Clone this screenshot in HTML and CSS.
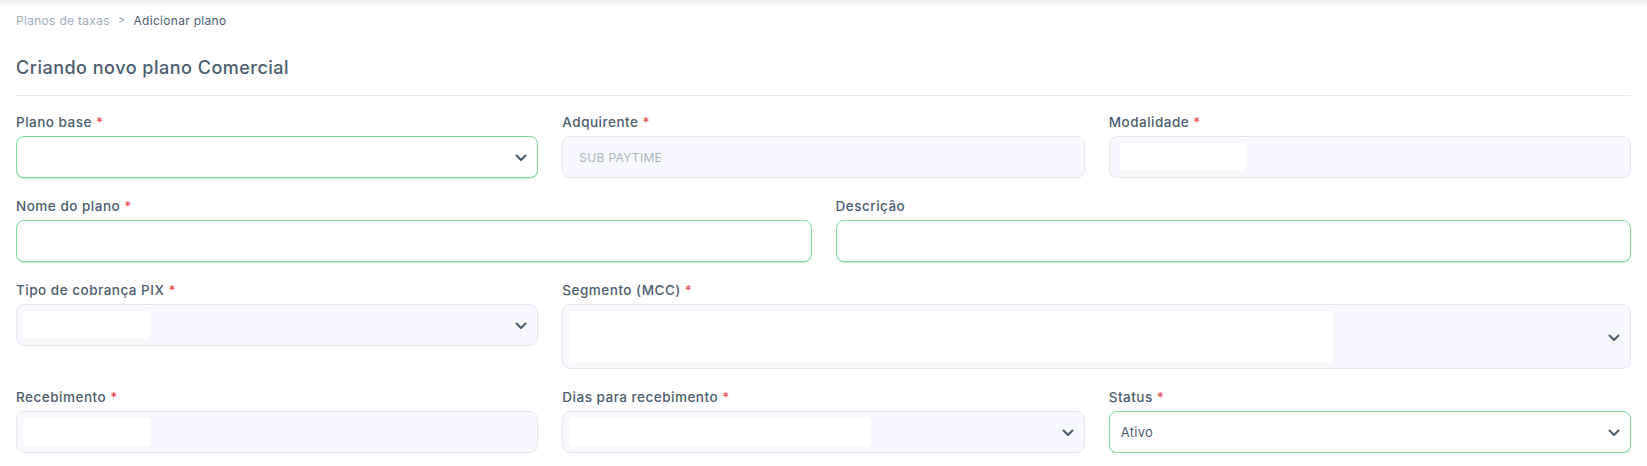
FILE: index.html
```html
<!DOCTYPE html>
<html lang="pt-BR">
<head>
  <meta charset="UTF-8" />
  <meta name="viewport" content="width=device-width, initial-scale=1.0"/>
  <title>Adicionar plano</title>
  <link rel="stylesheet" href="styles.css">
</head>
<body>

  <div class="page">

    <!-- Breadcrumb -->
    <div class="breadcrumb">
      <a href="#">Planos de taxas</a>
      <span class="sep">&gt;</span>
      <span class="current">Adicionar plano</span>
    </div>

    <h1 class="title">Criando novo plano Comercial</h1>

    <!-- Form -->
    <form class="plan-form">

      <div class="field span-2">
        <label>Plano base <span class="req">*</span></label>
        <div class="box active">
          <svg class="chevron" width="12" height="8" viewBox="0 0 12 8"><polyline points="1.5,1.5 6,6 10.5,1.5"/></svg>
        </div>
      </div>

      <div class="field span-2">
        <label>Adquirente <span class="req">*</span></label>
        <div class="box disabled text-pad">
          <span class="placeholder">SUB PAYTIME</span>
        </div>
      </div>

      <div class="field span-2">
        <label>Modalidade <span class="req">*</span></label>
        <div class="box disabled">
          <span class="mask mask-modal"></span>
        </div>
      </div>

      <div class="field span-3">
        <label>Nome do plano <span class="req">*</span></label>
        <div class="box active"></div>
      </div>

      <div class="field span-3">
        <label>Descrição</label>
        <div class="box active"></div>
      </div>

      <div class="field span-2">
        <label>Tipo de cobrança PIX <span class="req">*</span></label>
        <div class="box disabled">
          <span class="mask mask-short"></span>
          <svg class="chevron" width="12" height="8" viewBox="0 0 12 8"><polyline points="1.5,1.5 6,6 10.5,1.5"/></svg>
        </div>
      </div>

      <div class="field span-4">
        <label>Segmento (MCC) <span class="req">*</span></label>
        <div class="box disabled tall">
          <span class="mask mask-mcc"></span>
          <svg class="chevron" width="12" height="8" viewBox="0 0 12 8"><polyline points="1.5,1.5 6,6 10.5,1.5"/></svg>
        </div>
      </div>

      <div class="field span-2">
        <label>Recebimento <span class="req">*</span></label>
        <div class="box disabled">
          <span class="mask mask-short"></span>
        </div>
      </div>

      <div class="field span-2">
        <label>Dias para recebimento <span class="req">*</span></label>
        <div class="box disabled">
          <span class="mask mask-days"></span>
          <svg class="chevron" width="12" height="8" viewBox="0 0 12 8"><polyline points="1.5,1.5 6,6 10.5,1.5"/></svg>
        </div>
      </div>

      <div class="field span-2">
        <label>Status <span class="req">*</span></label>
        <div class="box active text-pad-sm">
          <span class="value">Ativo</span>
          <svg class="chevron" width="12" height="8" viewBox="0 0 12 8"><polyline points="1.5,1.5 6,6 10.5,1.5"/></svg>
        </div>
      </div>

    </form>
  </div>

</body>
</html>
```

FILE: styles.css
```css
  body {
    margin: 0;
    padding: 0;
    font-family: 'Inter', 'Noto Sans', sans-serif;
    background: #fff;
    color: #4b5d6e;
  }

  .page {
    padding: 0 16px;
    background: linear-gradient(#eeeff1, #fff 7px) no-repeat;
    background-size: 100% 8px;
  }

  /* Breadcrumb */
  .breadcrumb {
    display: flex;
    align-items: center;
    gap: 8px;
    height: 40px;
    font-size: 12px;
    letter-spacing: 0.3px;
  }

  .breadcrumb a {
    color: #9badbb;
    text-decoration: none;
  }

  .breadcrumb .sep {
    color: #8d9dab;
    font-size: 11px;
  }

  .breadcrumb .current {
    color: #4e6070;
  }

  .title {
    margin: 16px 0 0;
    padding-bottom: 15px;
    font-size: 18px;
    line-height: 24px;
    font-weight: 500;
    letter-spacing: 0.5px;
    color: #4b5d6e;
    border-bottom: 1px solid #e6e9ed;
  }

  /* Form grid */
  .plan-form {
    display: grid;
    grid-template-columns: repeat(6, 1fr);
    column-gap: 24px;
    row-gap: 18px;
    margin-top: 16px;
    align-items: start;
  }

  .span-2 { grid-column: span 2; }
  .span-3 { grid-column: span 3; }
  .span-4 { grid-column: span 4; }

  .field label {
    display: block;
    height: 20px;
    line-height: 20px;
    margin-bottom: 4px;
    font-size: 13.5px;
    font-weight: 500;
    letter-spacing: 0.5px;
    color: #4b5d6e;
  }

  .req {
    color: #e5484d;
  }

  .box {
    position: relative;
    display: flex;
    align-items: center;
    box-sizing: border-box;
    height: 42px;
    border-radius: 8px;
    border: 1px solid #e3e8ee;
    background: #fff;
  }

  .box.active {
    border-color: #7dd9a1;
    box-shadow: 0 1px 0 #c5efd4;
  }

  .box.disabled {
    background: #f6f8fb;
    border-color: #e3e8ee;
  }

  .box.tall {
    height: 65px;
  }

  .text-pad {
    padding-left: 16px;
  }

  .text-pad-sm {
    padding-left: 11px;
  }

  .placeholder {
    font-size: 12px;
    letter-spacing: 0.3px;
    color: #a9b6c3;
  }

  .value {
    font-size: 13px;
    letter-spacing: 0.3px;
    color: #4b5d6e;
  }

  .chevron {
    position: absolute;
    right: 10px;
    top: 50%;
    margin-top: -3px;
    fill: none;
    stroke: #4b5d6e;
    stroke-width: 2;
    stroke-linecap: round;
    stroke-linejoin: round;
  }

  /* hidden values (blanked out) */
  .mask {
    display: block;
    background: #fff;
  }

  .mask-modal {
    margin-left: 10px;
    width: 126px;
    height: 28px;
  }

  .mask-short {
    margin-left: 6px;
    width: 127px;
    height: 28px;
  }

  .mask-mcc {
    margin-left: 6px;
    width: 764px;
    height: 52px;
  }

  .mask-days {
    margin-left: 6px;
    width: 302px;
    height: 30px;
  }
```
